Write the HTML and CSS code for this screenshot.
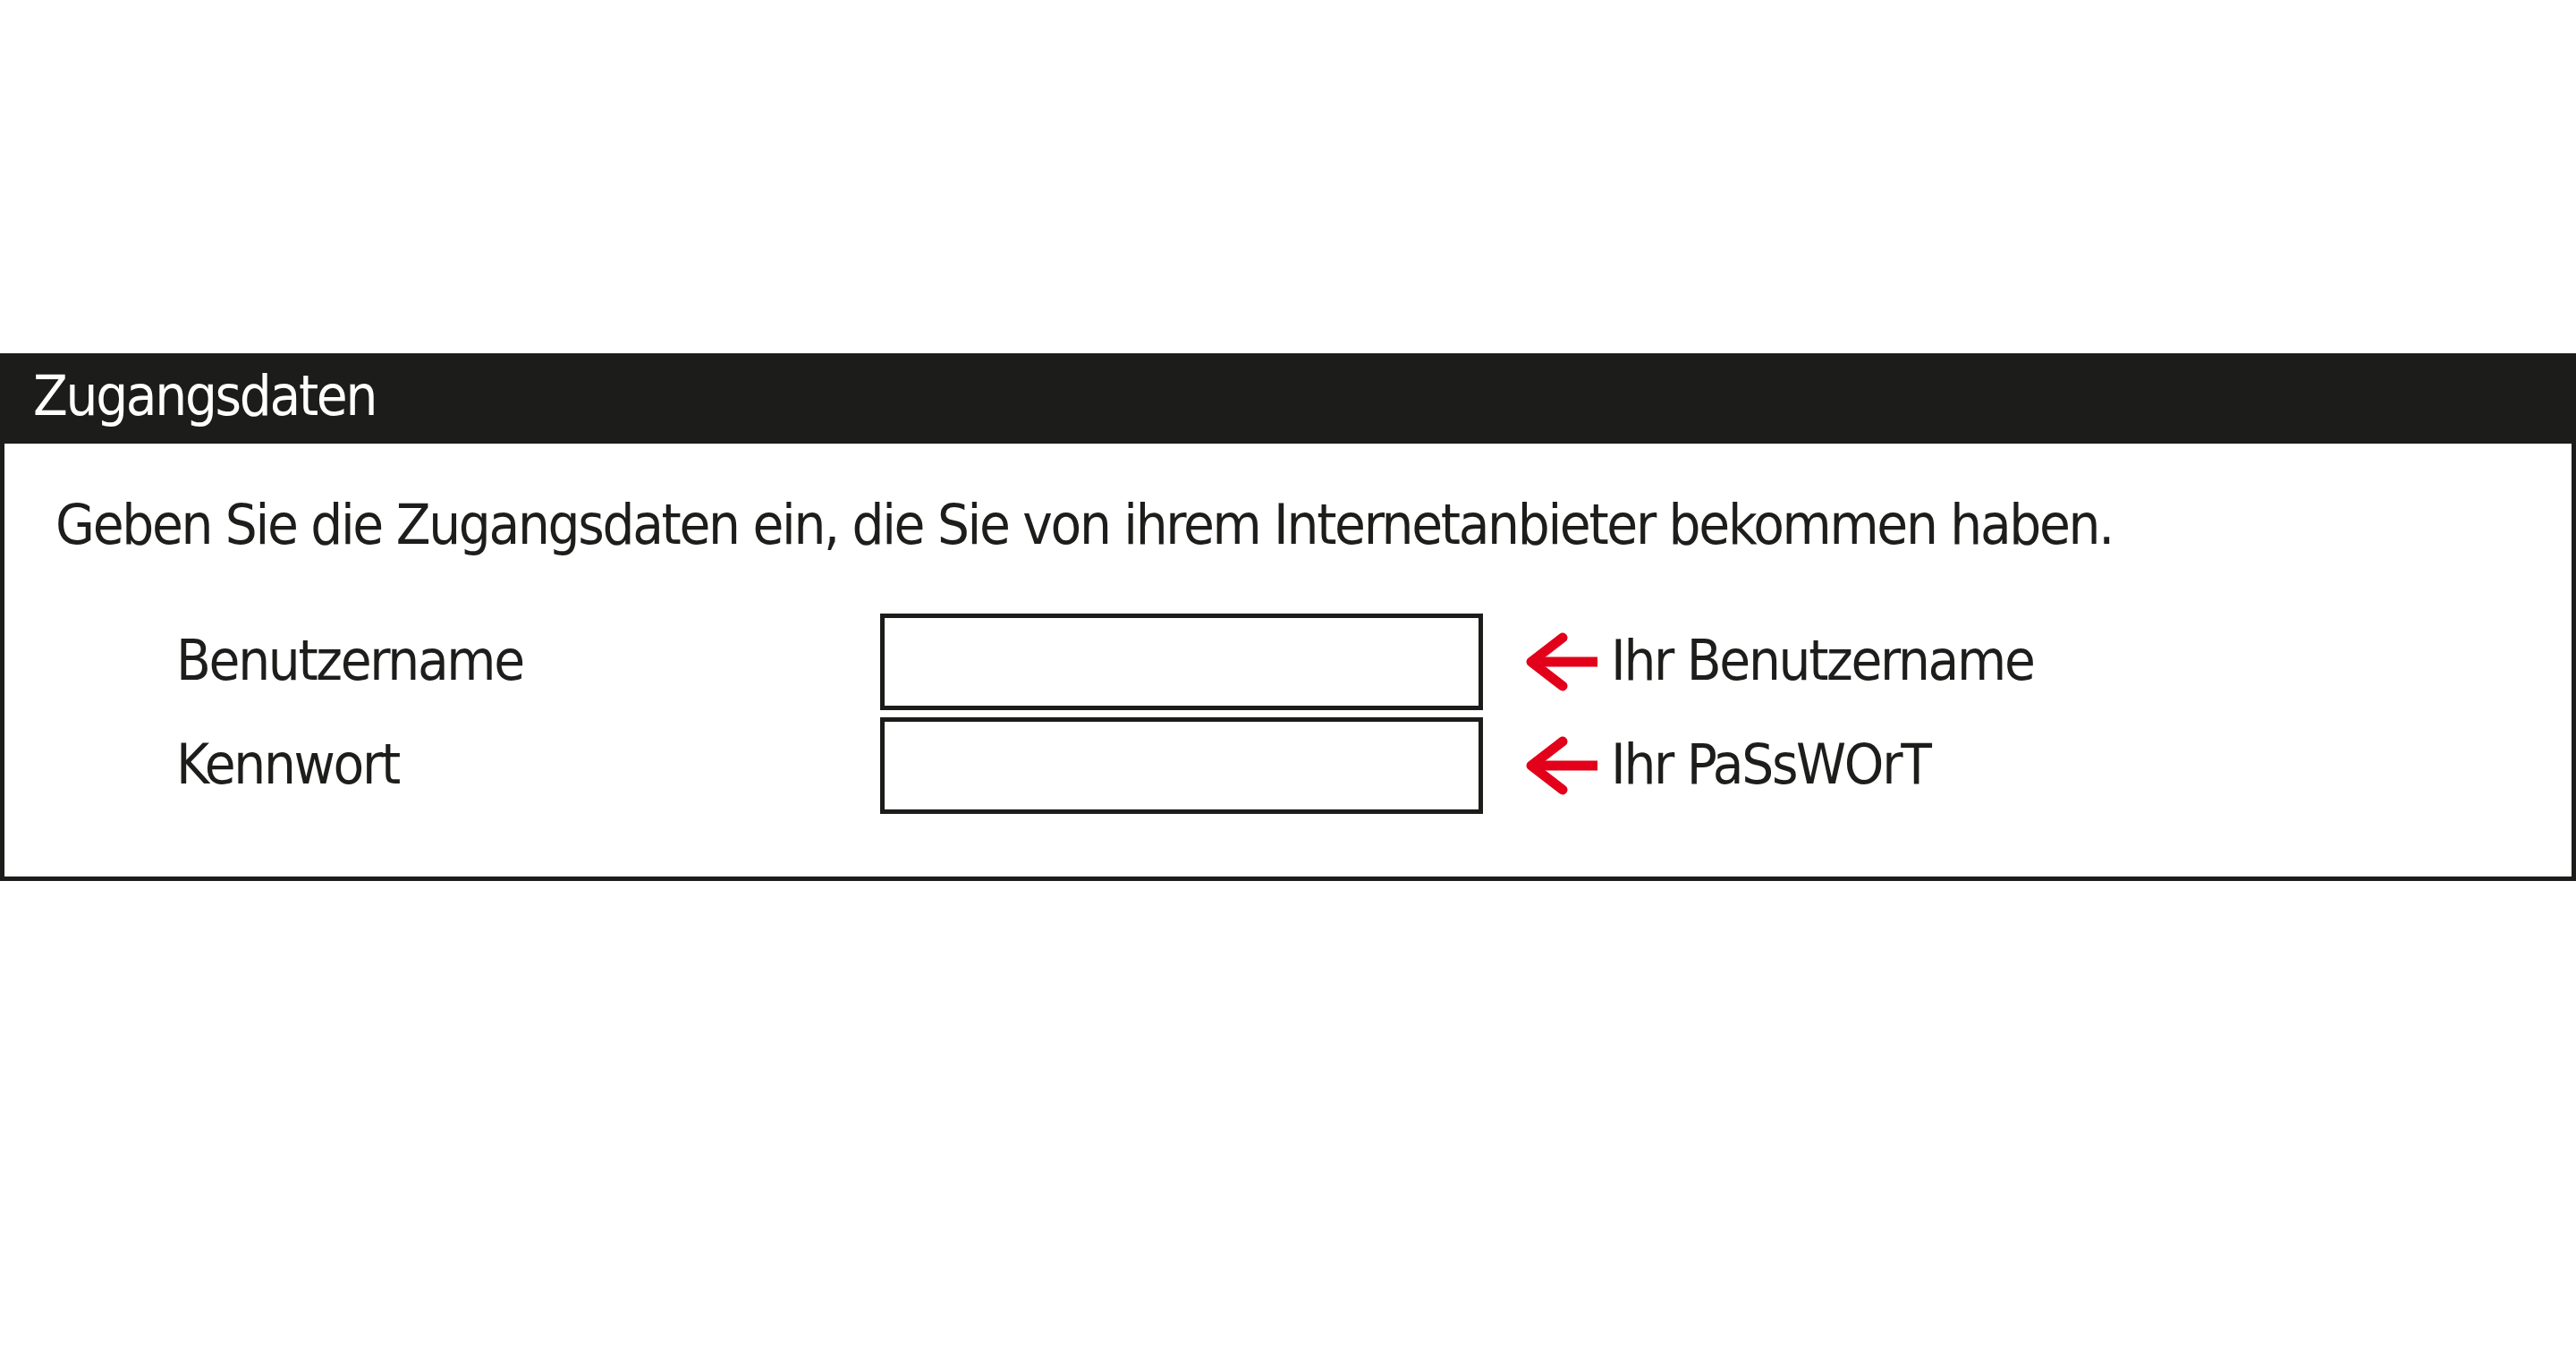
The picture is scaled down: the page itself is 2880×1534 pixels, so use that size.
FILE: index.html
```html
<!DOCTYPE html>
<html lang="de">
<head>
  <meta charset="UTF-8">
  <meta name="viewport" content="width=device-width, initial-scale=1.0">
  <title>Zugangsdaten</title>
  <link rel="stylesheet" href="styles.css">
</head>
<body>
  <div class="panel">
    <div class="panel-header">Zugangsdaten</div>
    <div class="panel-body">
      <p class="intro">Geben Sie die Zugangsdaten ein, die Sie von ihrem Internetanbieter bekommen haben.</p>

      <div class="form">
        <label class="label" for="user">Benutzername</label>
        <input class="field" id="user" type="text">
        <div class="hint">
          <svg class="arrow" viewBox="0 0 80 68"><path d="M41 7 L6 34 L41 61" /><line x1="10" y1="34" x2="80" y2="34" /></svg>
          <span>Ihr Benutzername</span>
        </div>

        <label class="label" for="pass">Kennwort</label>
        <input class="field" id="pass" type="password">
        <div class="hint">
          <svg class="arrow" viewBox="0 0 80 68"><path d="M41 7 L6 34 L41 61" /><line x1="10" y1="34" x2="80" y2="34" /></svg>
          <span>Ihr PaSsWOrT</span>
        </div>
      </div>
    </div>
  </div>
</body>
</html>
```

FILE: styles.css
```css
body {
  margin: 0;
  background: #fff;
  color: #1d1d1b;
  font-family: "DejaVu Sans Condensed", "Liberation Sans", sans-serif;
  font-size: 63px;
  letter-spacing: -2.3px;
}
.panel {
  margin-top: 395px;
  border: 5px solid #1c1c1a;
  border-top: none;
}
.panel-header {
  background: #1c1c1a;
  color: #fff;
  height: 101px;
  line-height: 95px;
  padding-left: 32px;
}
.panel-body {
  padding: 51px 0 70px 57px;
}
.intro {
  margin: 0;
  line-height: 79px;
}
.form {
  display: grid;
  grid-template-columns: 787px 674px auto;
  row-gap: 8px;
  align-items: center;
  margin-top: 60px;
  padding-left: 135px;
}
.label {
  line-height: 1;
  margin-top: -4px;
}
.field {
  box-sizing: border-box;
  height: 108px;
  width: 674px;
  margin: 0;
  border: 5px solid #1c1c1a;
  background: #fff;
  font: inherit;
}
.hint {
  display: flex;
  align-items: center;
  gap: 15px;
  padding-left: 48px;
}
.hint span {
  line-height: 1;
  margin-top: -4px;
}
.arrow {
  width: 80px;
  height: 68px;
  fill: none;
  stroke: #e2001a;
  stroke-width: 11;
}
.arrow path {
  stroke-linecap: round;
  stroke-linejoin: round;
}
```
